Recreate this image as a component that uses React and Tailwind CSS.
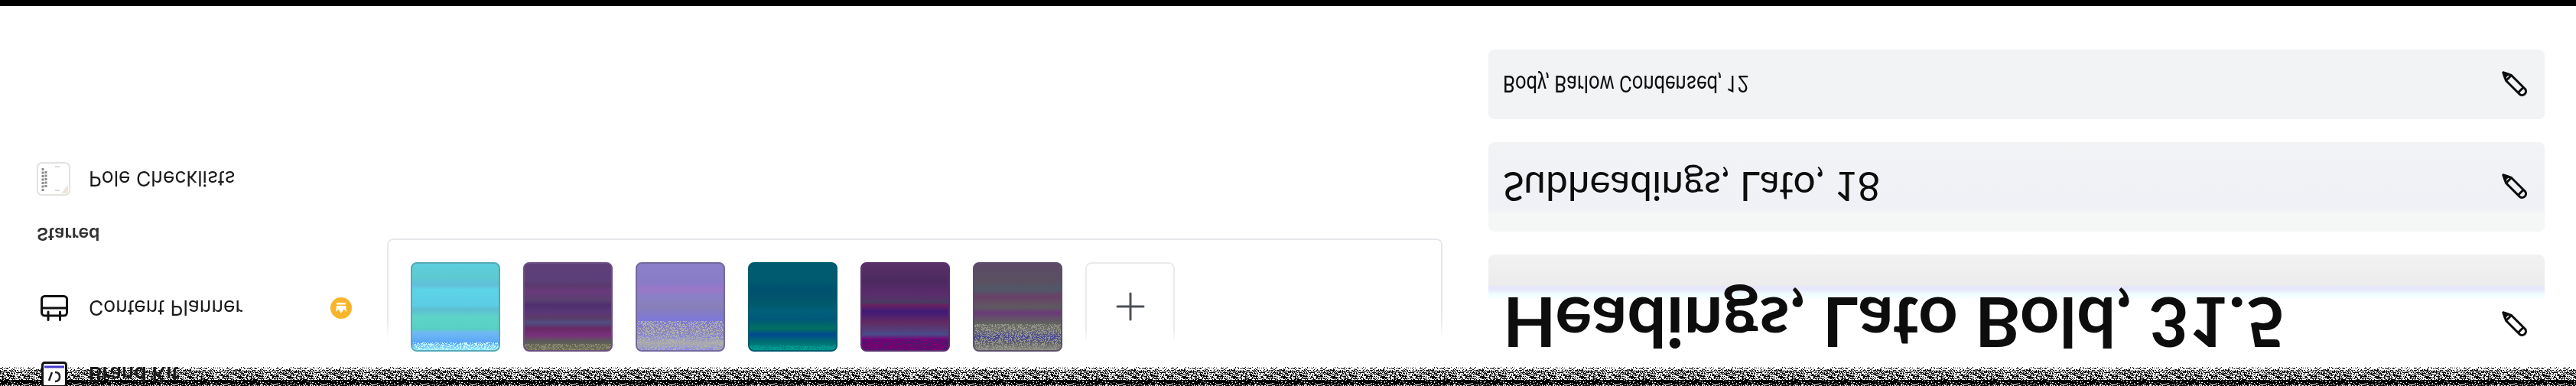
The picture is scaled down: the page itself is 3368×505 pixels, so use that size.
import React from 'react';

// small seeded generator so the dithered areas look the same on every run
const makeRandom = (seed) => () => {
  seed = (seed * 16807) % 2147483647;
  return seed / 2147483647;
};

const buildDots = (seed, width, height, densityAt, dotWidth = 1) => {
  const random = makeRandom(seed);
  let d = '';
  for (let y = 0; y < height; y++) {
    for (let x = 0; x < width; x += dotWidth) {
      if (random() < densityAt(y)) d += `M${x} ${y}h${dotWidth}v1h-${dotWidth}z`;
    }
  }
  return d;
};

// rows run from the page edge upward in the flipped layout
const noiseDensity = (y) => {
  if (y < 2) return 0.65;
  if (y < 8) return 0.92;
  if (y < 21) return 0.52;
  if (y < 25) return 0.2;
  return 0;
};
const noisePath = buildDots(7, 65, 25, noiseDensity, 1);

const NoiseBand = () => (
  <svg className="absolute left-0 top-0" width="3368" height="25">
    <defs>
      <pattern id="noise" width="65" height="25" patternUnits="userSpaceOnUse">
        <path d={noisePath} fill="#000" />
      </pattern>
    </defs>
    <rect width="3368" height="25" fill="url(#noise)" />
  </svg>
);

const swatches = [
  { id: 1, bg: 'bg-[linear-gradient(to_bottom,#8ae8fa_0%,#5aa6f8_8%,#70b8f4_20%,#58d0c2_25%,#5ed4c8_38%,#5cbfd0_47%,#5ccde4_52%,#5dd4e8_70%,#62bfdc_75%,#5ccad0_85%,#5fcfe0_100%)]', border: 'border-[#55a9b8]', dot: '#c8fbff', seed: 11, from: 12 },
  { id: 2, bg: 'bg-[linear-gradient(to_bottom,#6a6a58_3%,#5a5a5a_10%,#7a2f7c_17%,#662a66_25%,#4f4f80_32%,#5c3a68_38%,#5a3878_43%,#4f2f70_52%,#5a4070_58%,#6a3a7c_68%,#5a3a6e_75%,#5c3f78_80%,#5e3f78_100%)]', border: 'border-[#6b5080]', dot: '#8c8c70', seed: 23, from: 10 },
  { id: 3, bg: 'bg-[linear-gradient(to_bottom,#8888e8_0%,#a8a8a8_8%,#8888d0_15%,#8a84b8_22%,#7e78d8_35%,#8880b8_50%,#8a80c8_62%,#9a78c8_70%,#8a7cc8_78%,#8a80c8_100%)]', border: 'border-[#75699f]', dot: '#b0b0b0', seed: 37, from: 40 },
  { id: 4, bg: 'bg-[linear-gradient(to_bottom,#009088_0%,#006a70_10%,#004a90_18%,#007060_25%,#005878_35%,#00607a_45%,#00586a_55%,#005070_70%,#005a70_80%,#005a70_100%)]', border: 'border-[#005a70]', dot: '#00a096', seed: 41, from: 8 },
  { id: 5, bg: 'bg-[linear-gradient(to_bottom,#7a0070_0%,#7a0078_12%,#4a4a88_18%,#622a62_32%,#401a78_45%,#6a2060_52%,#4a3a62_55%,#5a2c6c_65%,#4c2a60_80%,#583068_100%)]', border: 'border-[#5a3070]', dot: '#46186a', seed: 53, from: 16 },
  { id: 6, bg: 'bg-[linear-gradient(to_bottom,#888880_0%,#606068_8%,#484898_15%,#707068_25%,#606060_32%,#6a3a78_43%,#5e5a60_50%,#6a4068_62%,#505868_70%,#5a5060_80%,#5c4a68_100%)]', border: 'border-[#5c4f68]', dot: '#98988c', seed: 61, from: 36 },
];

const Swatch = ({ swatch }) => {
  const dots = buildDots(swatch.seed, 117, 117, (y) => (y < swatch.from ? 0.4 : 0));
  return (
    <div className={`relative h-[117px] w-[117px] overflow-hidden rounded-lg border-2 ${swatch.border} ${swatch.bg}`}>
      <svg className="absolute -left-[2px] -top-[2px]" width="117" height="117" viewBox="0 0 117 117">
        <path d={dots} fill={swatch.dot} />
      </svg>
    </div>
  );
};

const PencilIcon = () => (
  <svg width="34" height="34" viewBox="0 0 34 34" fill="none" stroke="#0d0d0d" strokeWidth="3" strokeLinejoin="round">
    <path d="M2 32 L5.5 21.5 L23.5 3.5 A5 5 0 0 1 30.5 10.5 L12.5 28.5 Z" />
    <path d="M5.5 21.5 L12.5 28.5" />
    <path d="M21.5 6 L28.5 13" />
    <path d="M2 32 L4 26 L8 30 Z" fill="#0d0d0d" />
  </svg>
);

const CalendarIcon = () => (
  <svg width="36" height="34" viewBox="0 0 36 34" fill="none" stroke="#111" strokeWidth="3" strokeLinecap="round">
    <rect x="1.5" y="7" width="33" height="25.5" rx="4" />
    <path d="M1.5 17 H34.5" />
    <path d="M10 1.5 V12 M25.5 1.5 V12" />
  </svg>
);

const BrandKitIcon = () => (
  <svg width="34" height="34" viewBox="0 0 34 34" fill="none">
    <rect x="1.5" y="1.5" width="31" height="31" rx="3" fill="#fff" stroke="#111" strokeWidth="3" />
    <path d="M4 27 H30" stroke="#4338ca" strokeWidth="3" />
    <path d="M10 9 L14 20 M18 8 Q24 8 24 14 T18 20" stroke="#222" strokeWidth="2.5" />
  </svg>
);

const CrownBadge = () => (
  <div className="flex h-7 w-7 items-center justify-center rounded-full bg-[#f9b429]">
    <svg width="18" height="16" viewBox="0 0 18 16" fill="#fff">
      <path d="M2 3 L5.5 6.5 L9 1 L12.5 6.5 L16 3 L15 11 H3 Z" />
      <rect x="3" y="12.5" width="12" height="2.5" />
    </svg>
  </div>
);

const ChecklistThumb = () => (
  <svg width="44" height="44" viewBox="0 0 44 44" fill="none">
    <rect x="1" y="1" width="42" height="42" rx="6" fill="#fff" stroke="#e4e2df" strokeWidth="2" />
    <path d="M32 3 H38 Q41 3 41 8 V14 Z" fill="#ece3da" />
    <path d="M8 6 V36 M12 11 V33" stroke="#8b8b8b" strokeWidth="3" strokeDasharray="3 1.5" />
    <path d="M24 7 H30 M24 38 H30" stroke="#b8b8b8" strokeWidth="1" />
  </svg>
);

const SidebarRow = ({ icon, label, badge, className = '' }) => (
  <div className={`flex h-[44px] items-center ${className}`}>
    <div className="flex w-[68px] shrink-0 items-center justify-start">{icon}</div>
    <span className="text-[26.5px] leading-none text-[#1b1b1b]">{label}</span>
    {badge && <div className="absolute left-[432px]">{badge}</div>}
  </div>
);

const FontRow = ({ children, className = '', textClass = '' }) => (
  <div className={`flex items-center justify-between rounded-lg pl-[19px] pr-[22px] ${className}`}>
    <span className={`leading-none whitespace-nowrap text-[#0d0d0d] ${textClass}`}>{children}</span>
    <PencilIcon />
  </div>
);

export default function App() {
  return (
    <div className="relative flex h-[505px] w-[3368px] -scale-y-100 flex-col overflow-hidden bg-white font-['Inter',sans-serif]">
      <NoiseBand />
      <div className="relative flex h-[497px] items-start">
        {/* left menu */}
        <div className="flex w-[506px] shrink-0 flex-col pl-12 -mt-[7px]">
          <SidebarRow
            label={<span className="font-semibold">Brand Kit</span>}
            icon={<div className="pl-[6px]"><BrandKitIcon /></div>}
          />
          <SidebarRow
            className="mt-[43px]"
            label="Content Planner"
            icon={<div className="pl-[5px]"><CalendarIcon /></div>}
            badge={<CrownBadge />}
          />
          <div className="mt-[64px] text-[23px] font-semibold leading-none text-[#333]">Starred</div>
          <SidebarRow className="mt-[38px]" label="Pole Checklists" icon={<ChecklistThumb />} />
        </div>

        {/* brand colours */}
        <div className="relative flex h-[193px] w-[1380px] shrink-0 gap-[30px] pl-[31px] pt-[45px]">
          <div className="absolute inset-0 rounded-lg border-2 border-t-0 border-[#e7e8ea] [mask-image:linear-gradient(to_bottom,transparent_60px,black_90px)]"></div>
          {swatches.map((swatch) => (
            <Swatch key={swatch.id} swatch={swatch} />
          ))}
          <div className="relative flex h-[117px] w-[117px] items-center justify-center">
            <div className="absolute inset-0 rounded-lg border-2 border-[#e9eaec] [mask-image:linear-gradient(to_bottom,transparent_10px,black_30px)]"></div>
            <svg width="38" height="38" viewBox="0 0 38 38" stroke="#4b5057" strokeWidth="3" strokeLinecap="round">
              <path d="M2 19 H36 M19 2 V36" />
            </svg>
          </div>
        </div>

        {/* fonts */}
        <div className="ml-[60px] flex w-[1381px] shrink-0 flex-col gap-[30px]">
          <FontRow
            className="-mt-[10px] h-[182px] items-center bg-[linear-gradient(to_bottom,transparent_122px,#effdff_130px,#e8e8fc_136px,#e6e6fb_140px,#ececec_142px,#f2f2f2_182px)]"
            textClass="font-['Lato',sans-serif] text-[90.3px] font-bold"
          >
            Headings, Lato Bold, 31.5
          </FontRow>
          <FontRow
            className="h-[117px] bg-[linear-gradient(to_bottom,#f5f6f6_23px,#f0f1f6_30px,#f1f3f5_117px)]"
            textClass="font-['Lato',sans-serif] text-[51.4px]"
          >
            Subheadings, Lato, 18
          </FontRow>
          <FontRow className="h-[91px] bg-[#f2f3f5]" textClass="font-['Roboto',sans-serif] text-[32px] inline-block origin-left scale-x-[0.8]">
            Body, Barlow Condensed, 12
          </FontRow>
        </div>
      </div>
      <div className="h-2 shrink-0 bg-black"></div>
    </div>
  );
}
